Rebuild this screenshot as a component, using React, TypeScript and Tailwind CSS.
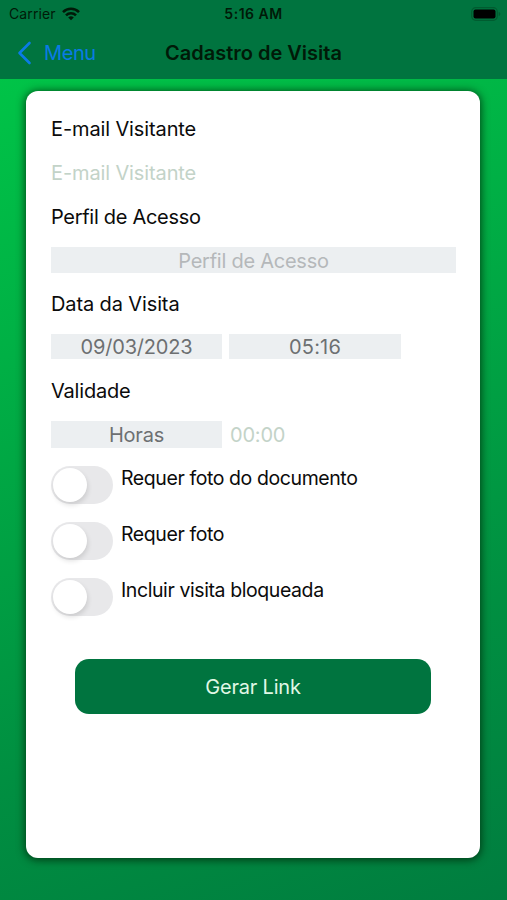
import React from 'react';

const WifiIcon: React.FC = () => (
  <svg width="18" height="14" viewBox="0 0 18 14" fill="none" stroke="#001a08" strokeWidth="2.6">
    <path d="M1 5.1a11.4 11.4 0 0 1 16 0" />
    <path d="M4 8.3a7.1 7.1 0 0 1 10 0" />
    <path d="M9 13.3 6.2 10.5a4 4 0 0 1 5.6 0Z" fill="#001a08" stroke="none" />
  </svg>
);

const BatteryIcon: React.FC = () => (
  <svg width="30" height="14" viewBox="0 0 30 14">
    <rect x="0.7" y="0.7" width="25.6" height="12.6" rx="4" fill="none" stroke="#005c30" strokeWidth="1.2" />
    <rect x="2.5" y="2.5" width="22" height="9" rx="2" fill="#000" />
    <path d="M27.7 5v4c1-.3 1.6-1 1.6-2s-.6-1.700-1.600-2Z" fill="#005c30" />
  </svg>
);

const Label: React.FC<{ children: React.ReactNode }> = ({ children }) => (
  <div className="h-[26px] text-[20px] leading-[27px] text-[#0b0b0b]">{children}</div>
);

const toggles = ['Requer foto do documento', 'Requer foto', 'Incluir visita bloqueada'];

const Toggle: React.FC<{ label: string }> = ({ label }) => (
  <div className="flex h-[38px] items-start gap-2">
    <div className="h-[38px] w-[62px] rounded-full bg-[#e8e8ea] p-[2px]">
      <div className="h-[34px] w-[34px] rounded-full bg-white shadow-[1px_3px_5px_rgba(0,0,0,0.12)]" />
    </div>
    <span className="text-[19.5px] leading-[25px] tracking-[-0.41px] text-[#0b0b0b]">{label}</span>
  </div>
);

export default function App() {
  return (
    <div
      className="flex h-[900px] w-[507px] flex-col overflow-hidden bg-linear-[160deg,#00c948_0%,#00b045_33%,#008f41_72%,#007d3f_100%]"
      style={{ fontFamily: 'Inter, "Liberation Sans", sans-serif' }}
    >
      <header className="h-[79px] shrink-0 bg-[#00743f]">
        {/* Status bar */}
        <div className="grid h-[27px] grid-cols-[1fr_auto_1fr] items-center px-[6px] text-[14px] text-[#001a08]">
          <div className="flex items-center gap-[6px] pl-[3px]">
            <span className="tracking-[0.1px]">Carrier</span>
            <WifiIcon />
          </div>
          <span className="text-center font-semibold tracking-[0.5px]">5:16 AM</span>
          <div className="flex justify-end">
            <BatteryIcon />
          </div>
        </div>

        {/* Navigation bar */}
        <div className="grid h-[51px] grid-cols-[1fr_auto_1fr] items-center">
          <div className="flex items-center gap-3 pl-[17px] text-[20px] tracking-[-0.4px] text-[#0a7be6]">
            <svg width="15" height="24" viewBox="0 0 15 24" fill="none" stroke="currentColor" strokeWidth="2.6" strokeLinecap="round" strokeLinejoin="round">
              <path d="M12.500 2 2.500 12l10 10" />
            </svg>
            <span>Menu</span>
          </div>
          <h1 className="text-[20px] font-semibold text-[#001a08]">Cadastro de Visita</h1>
          <div />
        </div>
      </header>

      <main className="mt-3 ml-[26px] h-[767px] w-[454px] rounded-[12px] bg-white px-[25px] pt-[25px] text-[20px] tracking-[-0.2px] shadow-[0_1px_8px_1px_rgba(0,40,10,0.8)]">
        <div className="tracking-[-0.12px]">
          <Label>E-mail Visitante</Label>
        </div>
        <div className="mt-[18px] h-[26px] leading-[27px] tracking-[-0.12px] text-[#c3d3c8]">E-mail Visitante</div>

        <div className="mt-[18px] tracking-[-0.3px]">
          <Label>Perfil de Acesso</Label>
        </div>
        <div className="mt-[17px] h-[26px] w-[405px] bg-[#eceff1] text-center leading-[28px] tracking-[-0.25px] text-[#b5b8ba]">
          Perfil de Acesso
        </div>

        <div className="mt-[18px] tracking-[-0.12px]">
          <Label>Data da Visita</Label>
        </div>
        <div className="mt-[17px] flex h-[25px] gap-[7px] text-center leading-[27px] text-[#6d7072]">
          <div className="w-[171px] bg-[#eceff1]">09/03/2023</div>
          <div className="w-[172px] bg-[#eceff1] tracking-[0.2px]">05:16</div>
        </div>

        <div className="mt-[19px]">
          <Label>Validade</Label>
        </div>
        <div className="mt-[17px] flex h-[27px] gap-2 leading-[28px]">
          <div className="w-[171px] bg-[#eceff1] text-center text-[#6d7072]">Horas</div>
          <div className="text-[#c3d3c8]">00:00</div>
        </div>

        <div className="mt-[18px] flex flex-col gap-[18px]">
          {toggles.map((label) => (
            <Toggle key={label} label={label} />
          ))}
        </div>

        <button className="mt-[43px] ml-6 block h-[55px] w-[356px] rounded-[14px] bg-[#00743f] text-[#e0f8e6]">
          Gerar Link
        </button>
      </main>
    </div>
  );
}
